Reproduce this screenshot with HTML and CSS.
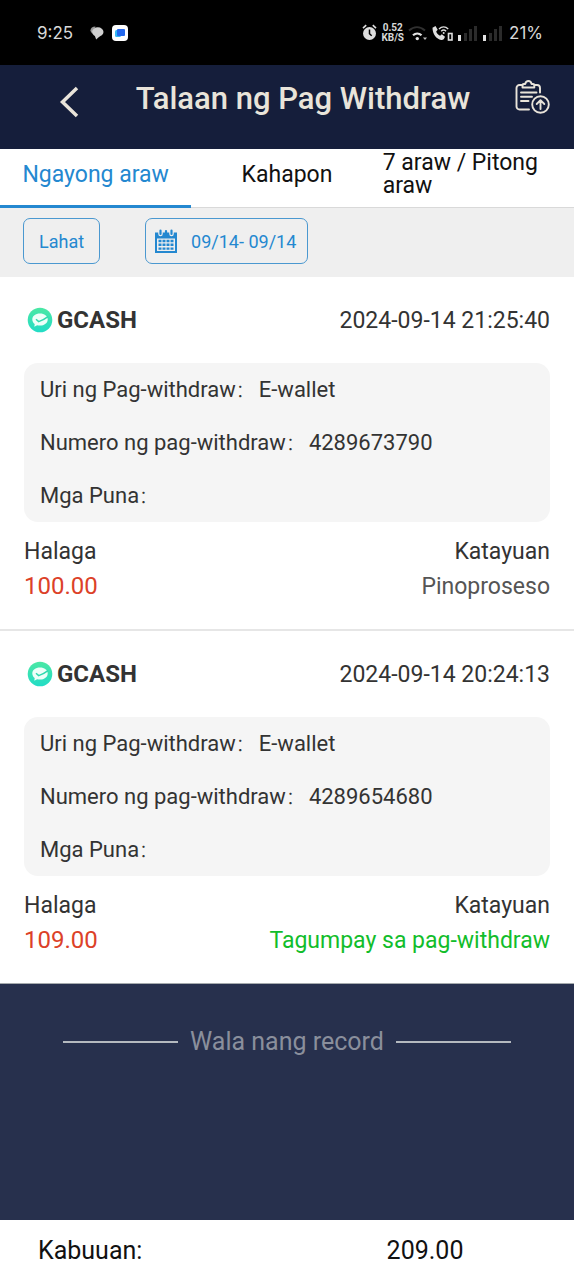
FILE: index.html
```html
<!DOCTYPE html>
<html lang="fil">
<head>
<meta charset="utf-8">
<meta name="viewport" content="width=device-width, initial-scale=1">
<title>Talaan ng Pag Withdraw</title>
<link rel="stylesheet" href="styles.css">
</head>
<body>
<svg class="defs" aria-hidden="true">
  <defs>
    <linearGradient id="mint" x1="0" y1="0" x2="0" y2="1">
      <stop offset="0" stop-color="#4be8a4"/>
      <stop offset="1" stop-color="#22dcc6"/>
    </linearGradient>
    <symbol id="wallet" viewBox="0 0 26 26">
      <circle cx="13" cy="13" r="12.3" fill="url(#mint)"/>
      <path d="M13 6.500c-4.500 0-7.700 2.500-7.700 6 0 1.900 1 3.500 2.400 4.600l-.4 2.600 2.800-1.500c.9.300 1.900.4 2.900.4 4.400 0 7.700-2.600 7.700-6.100s-3.300-6-7.700-6z" fill="#eefff9"/>
      <path d="M9 12.300l2.700 2.300c3-1 6-2.500 9.300-5" fill="none" stroke="#2fd9ae" stroke-width="1.500"/>
    </symbol>
    <symbol id="signal" viewBox="0 0 20 16">
      <path d="M0 10h3v6H0z" fill="#e2e2e2"/>
      <path d="M6 8h3v8H6zM11 4h3v12h-3zM16 1h3v15h-3z" fill="#2b2b2b"/>
    </symbol>
  </defs>
</svg>

<div class="status">
  <span class="status-time">9:25</span>
  <svg class="chat" width="14" height="14" viewBox="0 0 14 14"><path d="M5.500.5C2.500.5.500 2 .500 4.300c0 1.400.7 2.500 1.800 3.200" fill="#999"/><ellipse cx="7.800" cy="6" rx="5.700" ry="4.700" fill="#d0d0d0"/><path d="M4.500 9l1.700 4.500L10 10z" fill="#d0d0d0"/></svg>
  <svg class="app" width="16" height="16" viewBox="0 0 16 16"><rect width="16" height="16" rx="4" fill="#fff"/><rect x="3" y="5" width="6" height="7" rx="1.500" fill="#35b9f5"/><rect x="5" y="4" width="8" height="7" rx="1" fill="#2368ee"/></svg>
  <div class="status-right">
    <svg width="15" height="17" viewBox="0 0 15 17"><circle cx="7.500" cy="9.500" r="6.500" fill="#dedede"/><path d="M1 4.200L4.200 1.200M14 4.200L10.800 1.200" stroke="#dedede" stroke-width="1.600"/><path d="M7.500 5.500v4.200l2.200 2" stroke="#000" stroke-width="1.500" fill="none"/></svg>
    <span class="speed"><span>0.52</span><span>KB/S</span></span>
    <svg class="wifi" width="20" height="16" viewBox="0 0 20 16"><path d="M1 5.500c5-4.500 11-4.500 16 0" fill="none" stroke="#303030" stroke-width="2"/><path d="M5 10.300c2.600-2.400 6-2.400 8.500 0" fill="none" stroke="#e2e2e2" stroke-width="2.200"/><circle cx="9.300" cy="13.600" r="1.700" fill="#e2e2e2"/><path d="M15 12.500h4L17 15z" fill="#bbb"/></svg>
    <svg width="21" height="16" viewBox="0 0 21 16"><path d="M.5 2.800L3.500 1l2.200 3.800-1.500 1.700c.7 2 2 3.400 3.900 4.300l1.700-1.500 3.200 2.400c-.7 2.200-2 3.600-3.800 3.300C4.500 14.300.5 9 .500 2.800z" fill="#dedede"/><path d="M7 4c2.800-2.900 6.400-2.900 9.200 0M9.200 6.200c1.600-1.500 3.300-1.500 4.900 0" fill="none" stroke="#dedede" stroke-width="1.400"/><circle cx="11.700" cy="8" r="1" fill="#dedede"/><rect x="16.500" y="8.500" width="3.500" height="6.500" fill="none" stroke="#dedede" stroke-width="1.600"/></svg>
    <svg class="bars" width="20" height="16"><use href="#signal"/></svg>
    <svg class="bars" width="20" height="16"><use href="#signal"/></svg>
    <span class="battery">21%</span>
  </div>
</div>

<header class="header">
  <button class="icon-button back" type="button" aria-label="Bumalik">
    <svg width="20" height="32" viewBox="0 0 20 32"><path d="M18 2L3.500 16 18 30" fill="none" stroke="#e9e4da" stroke-width="3.500"/></svg>
  </button>
  <h1 class="title">Talaan ng Pag Withdraw</h1>
  <button class="icon-button" type="button" aria-label="Mga ulat">
    <svg width="36" height="36" viewBox="0 0 36 36" fill="none" stroke="#e9e4da" stroke-width="1.900" stroke-linecap="round" stroke-linejoin="round">
      <path d="M8.500 5H5.500A3 3 0 0 0 2.500 8v18.500a3 3 0 0 0 3 3H15M20.500 5h2.500a3 3 0 0 1 3 3v4.500"/>
      <path d="M8.500 7.500V5.200c0-.8.5-1.200 1.200-1.200h1.500c.4-1.800 1.500-3 3.200-3s2.800 1.200 3.200 3h1.500c.8 0 1.200.4 1.200 1.200v2.300z"/>
      <path d="M7 12.500h15.500M7 16.800h11M7 21h7.500"/>
      <circle cx="26.500" cy="24.500" r="8.300"/>
      <path d="M26.500 29v-8.500M22.700 24l3.800-3.800 3.800 3.800"/>
    </svg>
  </button>
</header>

<nav class="tabs">
  <button class="tab active" type="button">Ngayong araw</button>
  <button class="tab" type="button">Kahapon</button>
  <button class="tab wrap" type="button">7 araw / Pitong araw</button>
</nav>

<div class="filters">
  <button class="filter" type="button">Lahat</button>
  <button class="filter date" type="button">
    <svg width="22" height="24" viewBox="0 0 22 24"><path fill="#2488d0" fill-rule="evenodd" d="M0 3.500h22V24H0zM2 9.500v12.500h18V9.500z"/><path d="M5.500 1.500v3.500M16.500 1.500v3.500" stroke="#efefef" stroke-width="4.500" stroke-linecap="round"/><path d="M5.500 1.500v3.500M16.500 1.500v3.500M11 2v2" stroke="#2488d0" stroke-width="2.200" stroke-linecap="round"/><path d="M3.500 12h15M3.500 15.800h15M3.500 19.600h15" stroke="#2488d0" stroke-width="2.400" stroke-dasharray="3 1"/></svg>
    <span>09/14- 09/14</span>
  </button>
</div>

<main class="main">
  <article class="card">
    <div class="card-head">
      <h2 class="provider"><svg width="26" height="26"><use href="#wallet"/></svg>GCASH</h2>
      <time class="stamp">2024-09-14 21:25:40</time>
    </div>
    <dl class="details">
      <div class="detail"><dt>Uri ng Pag-withdraw<span class="colon">：</span></dt><dd>E-wallet</dd></div>
      <div class="detail"><dt>Numero ng pag-withdraw<span class="colon">：</span></dt><dd>4289673790</dd></div>
      <div class="detail"><dt>Mga Puna<span class="colon">：</span></dt><dd></dd></div>
    </dl>
    <div class="summary">
      <div><div>Halaga</div><div class="amount">100.00</div></div>
      <div class="state"><div>Katayuan</div><div class="pending">Pinoproseso</div></div>
    </div>
  </article>
  <article class="card">
    <div class="card-head">
      <h2 class="provider"><svg width="26" height="26"><use href="#wallet"/></svg>GCASH</h2>
      <time class="stamp">2024-09-14 20:24:13</time>
    </div>
    <dl class="details">
      <div class="detail"><dt>Uri ng Pag-withdraw<span class="colon">：</span></dt><dd>E-wallet</dd></div>
      <div class="detail"><dt>Numero ng pag-withdraw<span class="colon">：</span></dt><dd>4289654680</dd></div>
      <div class="detail"><dt>Mga Puna<span class="colon">：</span></dt><dd></dd></div>
    </dl>
    <div class="summary">
      <div><div>Halaga</div><div class="amount">109.00</div></div>
      <div class="state"><div>Katayuan</div><div class="success">Tagumpay sa pag-withdraw</div></div>
    </div>
  </article>
  <p class="end">Wala nang record</p>
</main>

<footer class="total"><span>Kabuuan:</span><span>209.00</span></footer>
</body>
</html>
```

FILE: styles.css
```css
* {
  box-sizing: border-box;
}

body {
  margin: 0;
  min-height: 100vh;
  display: flex;
  flex-direction: column;
  background: #27304d;
  color: #333;
  font-family: Roboto, "Noto Sans CJK SC", sans-serif;
  font-size: 22px;
}

button {
  font: inherit;
  color: inherit;
  background: none;
  border: 0;
  padding: 0;
  cursor: pointer;
}

h1, h2, p, dl, dd {
  margin: 0;
}

svg {
  display: block;
  flex: none;
}

.defs {
  position: absolute;
  width: 0;
  height: 0;
}

.status {
  height: 65px;
  padding: 0 31px 0 37px;
  display: flex;
  align-items: center;
  background: #000;
  color: #d8d8d8;
  font-family: Inter, Roboto, sans-serif;
  font-size: 17px;
}

.chat {
  margin-left: 17px;
}

.app {
  margin-left: 8px;
}

.status-right {
  margin-left: auto;
  display: flex;
  align-items: center;
  gap: 4px;
}

.speed {
  display: flex;
  flex-direction: column;
  align-items: center;
  font-family: Roboto, sans-serif;
  font-size: 10px;
  font-weight: 700;
  line-height: 10px;
}

.bars {
  margin-left: 1px;
}

.battery {
  margin-left: 2px;
}

.header {
  height: 84px;
  padding: 0 24px 18px 46px;
  display: flex;
  align-items: center;
  background: #151e3b;
}

.icon-button {
  width: 36px;
  display: flex;
  justify-content: center;
}

.back {
  width: 46px;
  padding-top: 8px;
}

.title {
  flex: 1;
  text-align: center;
  color: #e9e4da;
  font-size: 31px;
  font-weight: 500;
}

.tabs {
  height: 59px;
  display: grid;
  grid-template-columns: repeat(3, 1fr);
  background: #fff;
  border-bottom: 1px solid #d9d9d9;
  color: #111;
  font-size: 23px;
  line-height: 23px;
}

.tab {
  padding-bottom: 6px;
  margin-bottom: -1px;
  border-bottom: 3px solid transparent;
}

.tab.active {
  color: #2488d0;
  border-bottom-color: #2488d0;
}

.tab.wrap {
  text-align: left;
}

.filters {
  padding: 10px 23px 13px;
  display: flex;
  gap: 45px;
  background: #efefef;
  color: #2488d0;
  font-size: 18px;
}

.filter {
  height: 46px;
  padding: 0 15px;
  border: 1px solid #4a98d0;
  border-radius: 7px;
}

.date {
  display: flex;
  align-items: center;
  gap: 14px;
  padding: 0 11px 0 9px;
}

.main {
  flex: 1;
}

.card {
  padding: 0 24px 25px;
  background: #fff;
  border-bottom: 2px solid #e6e6e6;
}

.card:last-of-type {
  border-bottom: 1px solid #a5aaad;
}

.card-head {
  height: 86px;
  display: flex;
  align-items: center;
  justify-content: space-between;
  padding-left: 3px;
}

.provider {
  display: flex;
  align-items: center;
  gap: 4px;
  font-size: 24px;
  font-weight: 700;
}

.stamp {
  font-size: 23px;
}

.details {
  padding: 0 16px;
  background: #f5f5f5;
  border-radius: 14px;
}

.detail {
  display: flex;
  gap: 5px;
  line-height: 53px;
}

.colon {
  font-family: "Noto Sans CJK SC", sans-serif;
  font-size: 18px;
  font-weight: 300;
  line-height: 22px;
}

.summary {
  display: flex;
  justify-content: space-between;
  padding-top: 12px;
  font-size: 23px;
  line-height: 35px;
}

.state {
  text-align: right;
}

.amount {
  color: #dc4128;
  font-size: 24px;
}

.pending {
  color: #555;
}

.success {
  color: #12bd2b;
}

.end {
  display: flex;
  align-items: center;
  gap: 12px;
  padding: 43px 63px;
  color: #8a8f9c;
  font-size: 25px;
  line-height: 30px;
}

.end::before,
.end::after {
  content: "";
  flex: 1;
  height: 2px;
  background: #b4b9bf;
}

.total {
  height: 60px;
  padding: 0 38px;
  display: grid;
  grid-template-columns: 7fr 3fr;
  align-items: center;
  background: #fff;
  color: #111;
  font-size: 25px;
}
```
